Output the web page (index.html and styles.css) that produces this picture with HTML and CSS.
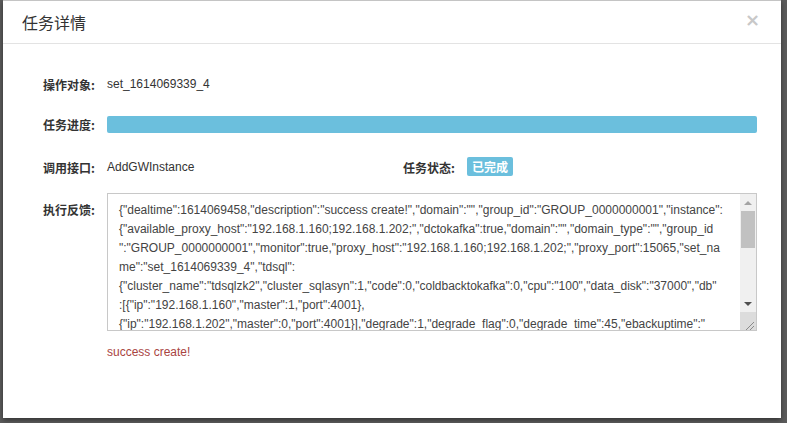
FILE: index.html
```html
<!DOCTYPE html>
<html lang="zh-CN">
<head>
<meta charset="utf-8">
<title>任务详情</title>
<link rel="stylesheet" href="styles.css">
</head>
<body>
<div class="modal">
  <div class="modal-header">
    <h4 class="modal-title">任务详情</h4>
    <span class="close">×</span>
  </div>
  <div class="modal-body">
    <div class="row row-target">
      <label class="label">操作对象:</label>
      <span class="value">set_1614069339_4</span>
    </div>
    <div class="row row-progress">
      <label class="label">任务进度:</label>
      <div class="progress"><div class="progress-bar" style="width:100%"></div></div>
    </div>
    <div class="row-split">
      <div class="row">
        <label class="label">调用接口:</label>
        <span class="value">AddGWInstance</span>
      </div>
      <div class="row">
        <label class="label">任务状态:</label>
        <span><span class="badge">已完成</span></span>
      </div>
    </div>
    <div class="row row-feedback">
      <label class="label">执行反馈:</label>
      <div class="textarea">
        <div class="ta-text">
          <div class="ta-line">{"dealtime":1614069458,"description":"success create!","domain":"","group_id":"GROUP_0000000001","instance":</div>
          <div class="ta-line">{"available_proxy_host":"192.168.1.160;192.168.1.202;","dctokafka":true,"domain":"","domain_type":"","group_id</div>
          <div class="ta-line">":"GROUP_0000000001","monitor":true,"proxy_host":"192.168.1.160;192.168.1.202;","proxy_port":15065,"set_na</div>
          <div class="ta-line">me":"set_1614069339_4","tdsql":</div>
          <div class="ta-line">{"cluster_name":"tdsqlzk2","cluster_sqlasyn":1,"code":0,"coldbacktokafka":0,"cpu":"100","data_disk":"37000","db"</div>
          <div class="ta-line">:[{"ip":"192.168.1.160","master":1,"port":4001},</div>
          <div class="ta-line">{"ip":"192.168.1.202","master":0,"port":4001}],"degrade":1,"degrade_flag":0,"degrade_time":45,"ebackuptime":"</div>
          <div class="ta-line">","ebackupweek":"","engine":"","flag":0,"group_id":"","hash":0,"instance_id":"","is_ro":0,"ldb":""</div>
        </div>
        <div class="scrollbar">
          <div class="sb-btn"><span class="arrow-up"></span></div>
          <div class="sb-track">
            <div class="sb-thumb"></div>
          </div>
          <div class="sb-btn"><span class="arrow-down"></span></div>
          <div class="sb-corner">
            <svg width="16" height="18" viewBox="0 0 16 18"><path d="M14 10 L6 18 M14 14 L10 18" stroke="#8a8a8a" stroke-width="1" fill="none"/></svg>
          </div>
        </div>
      </div>
    </div>
    <div class="row row-msg">
      <span></span>
      <span class="msg">success create!</span>
    </div>
  </div>
</div>
</body>
</html>
```

FILE: styles.css
```css
html, body {
  margin: 0;
  padding: 0;
}
body {
  width: 787px;
  height: 423px;
  background: #5b5b5b;
  font-family: "Liberation Sans", "Noto Sans CJK SC", sans-serif;
  font-size: 12px;
  color: #333;
  overflow: hidden;
}
.modal {
  margin-left: 3px;
  width: 778px;
  height: 418px;
  background: #fff;
  box-sizing: border-box;
  border-top: 1px solid #c4c4c4;
  box-shadow: 0 2px 5px rgba(0,0,0,0.45);
}
.modal-header {
  height: 42px;
  border-bottom: 1px solid #e3e3e3;
  display: flex;
  align-items: center;
  justify-content: space-between;
  padding: 0 19px 0 19px;
}
.modal-title {
  margin: 0;
  font-size: 16px;
  font-weight: normal;
  color: #333;
  font-family: "Noto Sans CJK SC", sans-serif;
  line-height: 20px;
}
.close {
  font-family: "DejaVu Sans", sans-serif;
  font-size: 18px;
  font-weight: bold;
  color: #c8c8c8;
  line-height: 18px;
  margin-top: -4px;
  margin-right: 2px;
}
.modal-body {
  padding: 30px 0 0 40px;
}
.row {
  display: grid;
  grid-template-columns: 64px 1fr;
  align-items: center;
  height: 20px;
}
.label {
  font-weight: bold;
  font-family: "Noto Sans CJK SC", sans-serif;
  color: #333;
  font-size: 12px;
}
.value {
  color: #333;
}
.row-progress {
  margin-top: 22px;
  height: 17px;
  width: 714px;
}
.progress {
  height: 17px;
  background: #f5f5f5;
  border-radius: 2px;
  overflow: hidden;
}
.progress-bar {
  height: 100%;
  background: #6bbfdd;
}
.row-split {
  margin-top: 24px;
  display: grid;
  grid-template-columns: 360px 1fr;
  width: 714px;
}
.badge {
  display: inline-block;
  background: #6bbfdd;
  color: #fff;
  font-weight: bold;
  font-family: "Noto Sans CJK SC", sans-serif;
  font-size: 12px;
  line-height: 19px;
  height: 19px;
  padding: 0 5px;
  border-radius: 2px;
  margin-top: -1px;
}
.row-feedback {
  margin-top: 16px;
  height: auto;
  width: 714px;
  align-items: start;
}
.row-feedback .label {
  margin-top: 8px;
}
.textarea {
  height: 138px;
  box-sizing: border-box;
  border: 1px solid #c8c8c8;
  display: flex;
  overflow: hidden;
}
.ta-text {
  flex: 1;
  overflow: hidden;
  padding: 7px 0 0 11px;
  color: #444;
  font-size: 12px;
  line-height: 19px;
}
.ta-line {
  white-space: nowrap;
}
.scrollbar {
  width: 16px;
  display: flex;
  flex-direction: column;
  background: #f0f0f0;
}
.sb-btn {
  height: 17px;
  display: flex;
  align-items: center;
  justify-content: center;
}
.sb-track {
  flex: 1;
}
.sb-thumb {
  height: 37px;
  background: #c1c1c1;
  margin: 0 1px;
}
.arrow-up {
  width: 0;
  height: 0;
  border-left: 4px solid transparent;
  border-right: 4px solid transparent;
  border-bottom: 4px solid #a3a3a3;
}
.arrow-down {
  width: 0;
  height: 0;
  border-left: 4px solid transparent;
  border-right: 4px solid transparent;
  border-top: 4px solid #505050;
}
.sb-corner {
  height: 18px;
  background: #dcdcdc;
}
.sb-corner svg {
  display: block;
}
.row-msg {
  margin-top: 11px;
}
.msg {
  color: #a94442;
  font-size: 12px;
}
```
